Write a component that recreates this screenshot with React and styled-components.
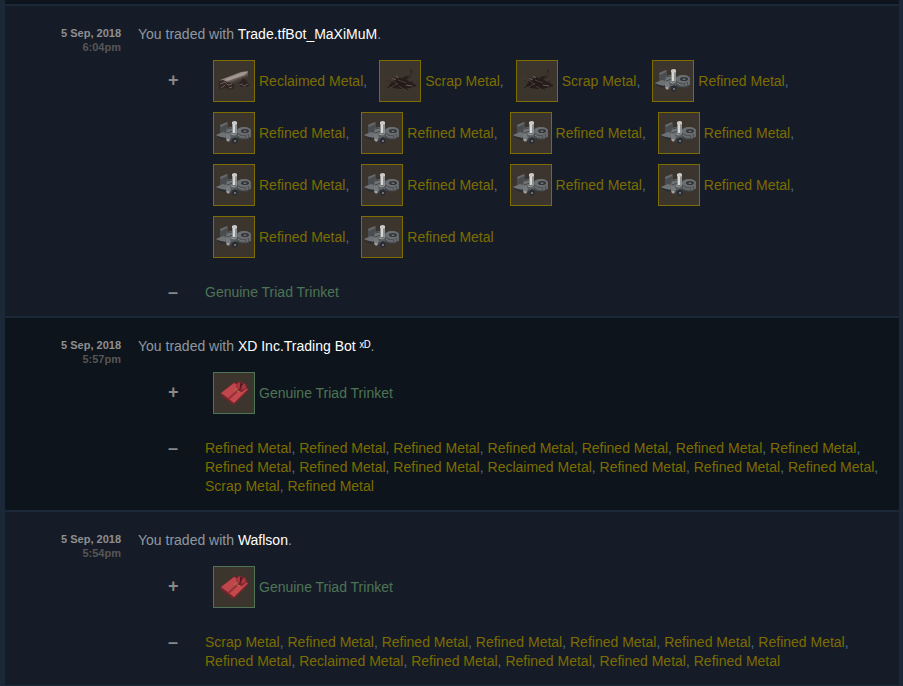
import React from "react";
import styled, { createGlobalStyle } from "styled-components";

const Global = createGlobalStyle`
  body {
    margin: 0;
    background: #1b2838;
    font-family: "Liberation Sans", Arial, sans-serif;
    font-size: 14px;
  }
`;

const qualityColor = { unique: "#7d6d00", genuine: "#4d7455" };

const History = styled.main`
  margin: 0 4px 0 5px;
  padding-top: 4px;
  background: #0d141b;
`;

const Trade = styled.article`
  display: grid;
  grid-template-columns: 116px minmax(0, 1fr);
  column-gap: 17px;
  padding: 19px 12px 14px 0;
  border-top: 2px solid #1b2838;
  background: ${(p) => (p.$shaded ? "#0d141b" : "#161c27")};
`;

const Stamp = styled.time`
  padding-top: 1px;
  text-align: right;
  font-size: 11px;
  font-weight: bold;
  line-height: 14px;
  color: #8f8f8f;
`;

const Clock = styled.span`
  display: block;
  color: #565656;
`;

const Summary = styled.p`
  margin: 0;
  line-height: 19px;
  color: #8f98a0;
`;

const Partner = styled.a`
  color: #ffffff;
  text-decoration: none;
`;

const Exchange = styled.div`
  display: grid;
  grid-template-columns: 37px minmax(0, 1fr);
  column-gap: 30px;
  margin-top: ${(p) => (p.$received ? "11px" : "20px")};
`;

const Sign = styled.span`
  padding-left: 30px;
  font-size: 18px;
  font-weight: bold;
  line-height: ${(p) => (p.$received ? "50px" : "19px")};
  color: #898989;
`;

const Received = styled.div`
  display: flex;
  flex-wrap: wrap;
  column-gap: 4px;
`;

const Given = styled.div`
  line-height: 19px;
  color: #47718f;
`;

const Entry = styled.span`
  display: flex;
  align-items: center;
  height: 52px;
  padding-left: 8px;
  color: #47718f;
`;

const ItemLink = styled.a`
  display: inline-flex;
  align-items: center;
  gap: 4px;
  color: ${(p) => qualityColor[p.$quality]};
  text-decoration: none;
`;

const TextLink = styled.a`
  color: ${(p) => qualityColor[p.$quality]};
  text-decoration: none;
`;

const Thumb = styled.svg`
  box-sizing: border-box;
  width: 42px;
  height: 42px;
  border: 1px solid currentColor;
  background: #3c352e;
`;

const Refined = () => (
  <>
    <path d="M2 22l6-3 6-4 6-1 6 1 5-1 6 3v6l-5 4-7-1-4 3-5-2-6-1-7-2z" fill="#3e4043" />
    <path d="M6 12l8-3v10l-6 4-2-2z" fill="#4a4d50" />
    <path d="M6 12l7-3v2l-6 3z" fill="#66696c" />
    <path d="M2 22l7-3 6 2-4 4-5-1z" fill="#6f7275" />
    <path d="M3 23l4 1 4 1 2-1v2l-4 1-6-3z" fill="#2c2d30" />
    <path d="M13 15l5-1 2 2v6l-5 2-3-3z" fill="#707375" />
    <path d="M13 16l5-1M13 20l6-2" stroke="#46494c" fill="none" />
    <path d="M18 9h5v13h-5z" fill="#8d8f90" />
    <path d="M19 10h2v12h-2z" fill="#d6d6d3" />
    <path d="M18 9q3-2 5 0v2q-2 1-5 0z" fill="#c9cac8" />
    <path d="M23 18q0-4 7-4t7 4v4q0 4-7 4t-7-4z" fill="#505356" />
    <ellipse cx="30" cy="18" rx="7" ry="4" fill="#6c6f72" />
    <ellipse cx="31" cy="18" rx="4" ry="2" fill="#323437" />
    <path d="M29 18q2-1 4 0l-2 1z" fill="#85888a" />
    <path d="M24 22q3 3 7 2M33 22v3M36 20v4" stroke="#7d8083" fill="none" />
    <path d="M16 21l5-1 3 2-2 4-5-1z" fill="#585b5f" />
    <path d="M17 21l3 1 2-1" stroke="#9b9d9e" fill="none" />
    <path d="M12 22l3-1 2 3-1 4-2 1-2-2z" fill="#777a7d" />
    <circle cx="14" cy="27" r="1" fill="#b0b1b1" />
    <path d="M18 26l3-2 3 2-1 4-3 1-2-2z" fill="#292d33" />
    <circle cx="21" cy="28" r="1" fill="#7e8792" />
  </>
);

const Reclaimed = () => (
  <>
    <path d="M5 20L26 12l8-2v5L16 23l-10 4z" fill="#665c56" />
    <path d="M6 19L27 11l7-1-3 4-20 7z" fill="#8c827b" />
    <path d="M11 18L30 11h4l-4 3-17 6z" fill="#a1978f" />
    <path d="M14 22l20-8v2l-18 7z" fill="#4b413c" />
    <path d="M5 20l4-1 4 2 4 1 4 2-1 4-5 1-4-2-5 2-1-3z" fill="#302725" />
    <path d="M6 23l5-2 3 3 4-1M7 27l4-3M15 27l3-1" stroke="#6f6159" fill="none" />
    <path d="M24 23l3-3 2-3 4 3 2 4-1 2-4-1-4 1z" fill="#2b2322" />
    <path d="M25 24l3-1 2 2 4-2" stroke="#5f514b" fill="none" />
  </>
);

const Scrap = () => (
  <>
    <path d="M9 24l5-5 5-3 9 4 7 4-4 3-10 1-8-1z" fill="#251d1b" />
    <path d="M4 18l10 3 14 8M7 27l10-6 13-5M12 16l9 6 14 3M9 25l12-2 12-2M11 20l15 4" stroke="#211a18" fill="none" />
    <path d="M31 9l1 3-2 3-6 2 4 4 8 4" stroke="#291f1c" strokeWidth="2" fill="none" />
    <path d="M4 18l9 2 5 4M19 25l8 5M18 19l8 3M10 27l8-5M32 10v3l-4 3" stroke="#4f3b31" fill="none" />
    <path d="M12 17l4 2M16 15l3 2M26 24l6 1" stroke="#6d5e55" fill="none" />
  </>
);

const Trinket = () => (
  <>
    <path d="M7 20L20 9l14 6v3L21 31l-2 1L7 23z" fill="#74242b" />
    <path d="M7 20L20 10l7 4-12 12z" fill="#bf464b" />
    <path d="M15 26l12-12 7 2-14 14z" fill="#c5484d" />
    <path d="M14 25L25 15l2 1-12 11z" fill="#94323a" />
    <path d="M22 13l3-5 7 3 1 4-5 4-5-1z" fill="#7b262e" />
    <path d="M22 13l3-4 2 3-3 5zM27 12l4-1 1 4-4 2z" fill="#a9373f" />
    <path d="M26 10l3 1-3 5z" fill="#54191f" />
    <path d="M20 18l3-3v3l3 1" stroke="#b36a4c" fill="none" />
  </>
);

const catalog = {
  refined: { name: "Refined Metal", quality: "unique", Art: Refined },
  reclaimed: { name: "Reclaimed Metal", quality: "unique", Art: Reclaimed },
  scrap: { name: "Scrap Metal", quality: "unique", Art: Scrap },
  trinket: { name: "Genuine Triad Trinket", quality: "genuine", Art: Trinket },
};

const refined = (count) => Array(count).fill("refined");

const trades = [
  {
    time: "6:04pm",
    partner: "Trade.tfBot_MaXiMuM",
    received: ["reclaimed", "scrap", "scrap", ...refined(11)],
    given: ["trinket"],
  },
  {
    time: "5:57pm",
    partner: "XD Inc.Trading Bot ˣᴰ",
    received: ["trinket"],
    given: [...refined(10), "reclaimed", ...refined(3), "scrap", "refined"],
  },
  {
    time: "5:54pm",
    partner: "Waflson",
    received: ["trinket"],
    given: ["scrap", ...refined(7), "reclaimed", ...refined(4)],
  },
];

function ReceivedItem({ id, last }) {
  const { name, quality, Art } = catalog[id];
  return (
    <Entry>
      <ItemLink href="#" $quality={quality}>
        <Thumb viewBox="0 0 40 40" aria-hidden="true">
          <Art />
        </Thumb>
        {name}
      </ItemLink>
      {!last && ","}
    </Entry>
  );
}

function GivenItem({ id, last }) {
  const { name, quality } = catalog[id];
  return (
    <>
      <TextLink href="#" $quality={quality}>
        {name}
      </TextLink>
      {!last && ", "}
    </>
  );
}

export default function App() {
  return (
    <>
      <Global />
      <History>
        {trades.map((trade, index) => (
          <Trade key={trade.time} $shaded={index % 2 === 1}>
            <Stamp>
              5 Sep, 2018
              <Clock>{trade.time}</Clock>
            </Stamp>
            <div>
              <Summary>
                You traded with <Partner href="#">{trade.partner}</Partner>.
              </Summary>
              <Exchange $received>
                <Sign $received>+</Sign>
                <Received>
                  {trade.received.map((id, i) => (
                    <ReceivedItem key={i} id={id} last={i === trade.received.length - 1} />
                  ))}
                </Received>
              </Exchange>
              <Exchange>
                <Sign>–</Sign>
                <Given>
                  {trade.given.map((id, i) => (
                    <GivenItem key={i} id={id} last={i === trade.given.length - 1} />
                  ))}
                </Given>
              </Exchange>
            </div>
          </Trade>
        ))}
      </History>
    </>
  );
}
